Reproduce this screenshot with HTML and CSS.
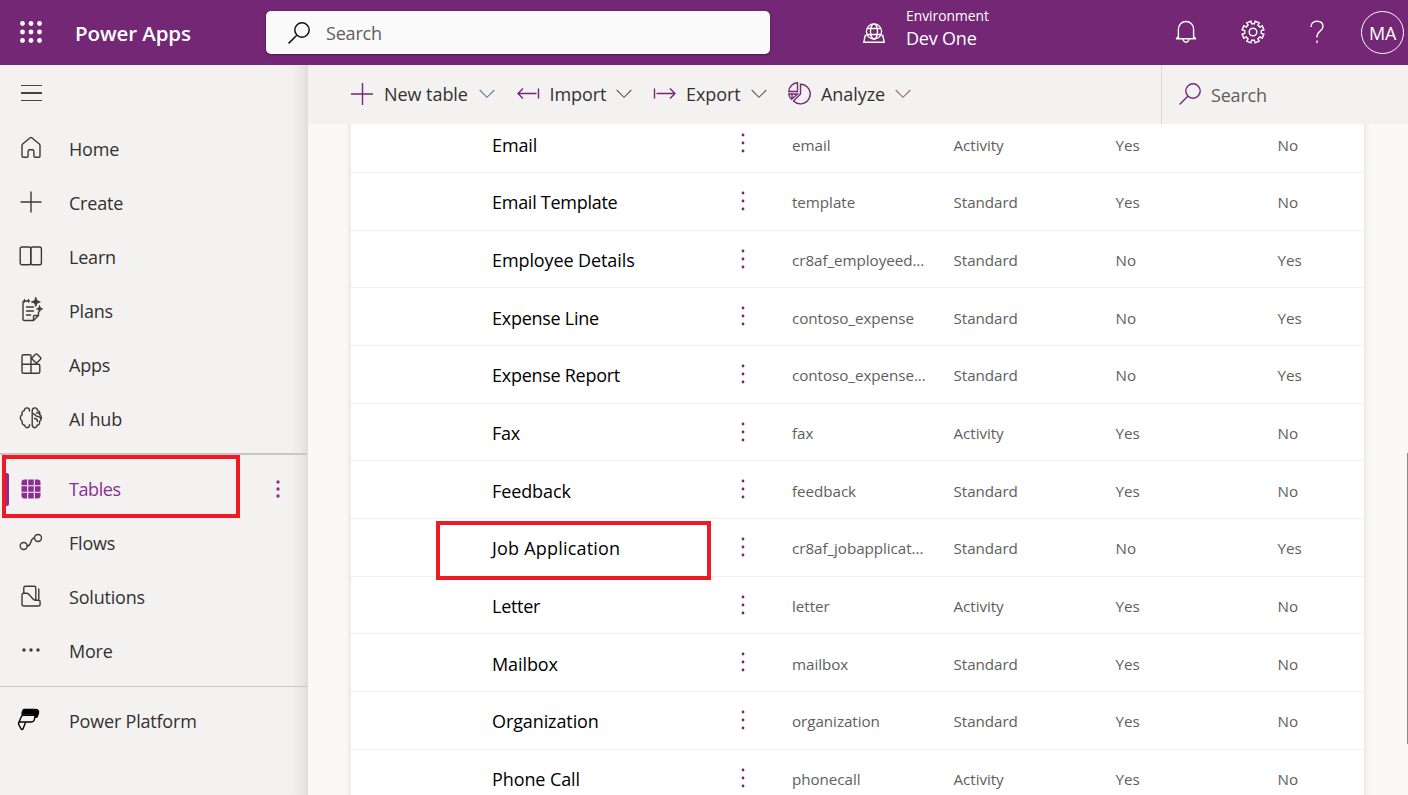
FILE: index.html
```html
<!DOCTYPE html>
<html lang="en">
<head>
<meta charset="utf-8">
<title>Power Apps</title>
<link rel="stylesheet" href="styles.css">
</head>
<body>
<svg class="defs" aria-hidden="true">
  <symbol id="dots" viewBox="0 0 4 20"><circle cx="2" cy="2" r="1.4"/><circle cx="2" cy="10" r="1.4"/><circle cx="2" cy="18" r="1.4"/></symbol>
  <symbol id="chevron" viewBox="0 0 16 10"><path d="M.7 1 8 8.3 15.3 1"/></symbol>
  <symbol id="lens" viewBox="0 0 22 22"><circle cx="14" cy="8" r="7.2"/><path d="M8.8 13.2.6 21.4"/></symbol>
</svg>
<header class="topbar">
  <svg class="waffle" width="22" height="22" viewBox="0 0 22 22"><g fill="#fff"><circle cx="2.5" cy="2.5" r="2.4"/><circle cx="11" cy="2.5" r="2.4"/><circle cx="19.5" cy="2.5" r="2.4"/><circle cx="2.5" cy="11" r="2.4"/><circle cx="11" cy="11" r="2.4"/><circle cx="19.5" cy="11" r="2.4"/><circle cx="2.5" cy="19.5" r="2.4"/><circle cx="11" cy="19.5" r="2.4"/><circle cx="19.5" cy="19.5" r="2.4"/></g></svg>
  <div class="brand"><span>Power Apps</span></div>
  <div class="search"><svg class="line dark" width="22" height="22"><use href="#lens"/></svg><span>Search</span></div>
  <svg class="globe line" width="22" height="20" viewBox="0 0 22 20"><circle cx="11" cy="8.5" r="7.6"/><ellipse cx="11" cy="8.5" rx="3.5" ry="7.6"/><path d="M4 5.5h14M4 11.5h14M3.500 12.500H2.200L.8 19.200h20.400l-1.400-6.700h-1.300"/></svg>
  <div class="env"><span class="env-label">Environment</span><span class="env-name">Dev One</span></div>
  <div class="actions">
    <svg class="line" width="22" height="24" viewBox="0 0 22 24"><path d="M3.400 18.200V9.400C3.400 4.700 6.700 1.500 11 1.500s7.600 3.200 7.600 7.900v8.800M1 18.700h20M1 18.700l2.400-2M21 18.700l-2.400-2M8 19c.3 2 1.400 3.200 3 3.200s2.700-1.200 3-3.200"/></svg>
    <svg class="line gear" width="24" height="24" viewBox="-12 -12 24 24"><circle r="3.800"/><path d="M-2.100-10.900-1.400-8.300 1.400-8.300 2.100-10.900 6.200-9.200 4.900-6.900 6.900-4.900 9.200-6.200 10.900-2.100 8.300-1.400 8.300 1.400 10.900 2.100 9.200 6.200 6.900 4.900 4.900 6.900 6.200 9.200 2.100 10.900 1.400 8.300-1.400 8.300-2.100 10.900-6.200 9.200-4.900 6.900-6.900 4.900-9.200 6.200-10.900 2.100-8.300 1.400-8.300-1.400-10.900-2.100-9.200-6.200-6.900-4.900-4.900-6.900-6.200-9.200z"/></svg>
    <svg class="line help" width="14" height="24" viewBox="0 0 14 24"><path d="M1 7C1 3.300 3.400 1.200 7 1.200s6 2.100 6 5.300c0 4.300-6 5-6 9.500v1.500M7 20.500V23"/></svg>
    <div class="avatar"><span>MA</span></div>
  </div>
</header>
<div class="body">
  <nav class="side">
    <div class="burger"><i></i><i></i><i></i></div>
    <div class="item"><svg width="24" height="24" viewBox="0 0 24 24"><path d="M3 9.500Q3 8.600 3.700 8L11.200 1.700q.8-.6 1.600 0L20.300 8q.7.600.7 1.500V20q0 1.300-1.300 1.300h-3.500q-1.300 0-1.300-1.300v-4.500q0-1.700-1.700-1.700h-2.400q-1.700 0-1.700 1.700V20q0 1.300-1.300 1.300H4.300Q3 21.300 3 20z"/></svg><span>Home</span></div>
    <div class="item"><svg width="24" height="24" viewBox="0 0 24 24"><path d="M12 2v20M2 12h20"/></svg><span>Create</span></div>
    <div class="item"><svg width="24" height="24" viewBox="0 0 24 24"><rect x="1.200" y="3" width="10.600" height="17.700" rx="1.800"/><rect x="11.800" y="3" width="10.600" height="17.700" rx="1.800"/></svg><span>Learn</span></div>
    <div class="item"><svg width="24" height="24" viewBox="0 0 24 24"><path d="M10.500 3H5.500Q4 3 4 4.500V21q0 1.500 1.500 1.500h9l5-5V14M14.500 22.500v-3.700q0-1.300 1.300-1.300h3.700M5.500 1.800V4M9.500 1.800V4M7.500 9h7M7.500 13h7M7.500 17h4"/><path class="solid spark" d="m16.800-.7 1.300 3.300 3.300 1.300-3.300 1.300-1.300 3.300-1.300-3.300-3.300-1.300 3.300-1.300zM20.600 7.700l.9 2.300 2.300.9-2.300.9-.9 2.300-.9-2.300-2.300-.9 2.300-.9z"/></svg><span>Plans</span></div>
    <div class="item"><svg width="24" height="24" viewBox="0 0 24 24"><path d="M12 21.300V3.800Q12 2.700 10.500 2.700h-6Q3 2.700 3 4.200V20q0 1.300 1.300 1.300h15q1.500 0 1.500-1.500v-6q0-1.500-1.500-1.500H3M16.600 2.300q.8-.8 1.600 0l3.300 3.300q.8.800 0 1.600l-3.300 3.300q-.8.800-1.600 0l-3.300-3.300q-.8-.8 0-1.600z"/></svg><span>Apps</span></div>
    <div class="item"><svg width="24" height="24" viewBox="0 0 24 24"><path d="M10.600 5C10.600 1 5.800.7 5.200 4.600 2.900 5 2.600 7.400 3.200 8.600.7 9.700.8 14 3.200 15.300c-.5 2.300.7 3.700 2.400 3.900.8 3.500 5 3.300 5-.4M13.200 5c0-4 4.800-4.300 5.400-.4 2.300.4 2.600 2.800 2 4 2.500 1.100 2.400 5.400 0 6.700.5 2.300-.7 3.700-2.400 3.900-.8 3.500-5 3.300-5-.4zM13.500 7.500c3 0 2.200 3 5.500 3 1.500 0 2.500 1 2.800 2M15.500 12.500c1.500 0 3 .5 3 3M17.500 7h2.500"/></svg><span>AI hub</span></div>
    <hr class="thick">
    <div class="item selected"><svg width="24" height="24" viewBox="0 0 24 24"><rect class="solid" x="2.500" y="2.500" width="19" height="19" rx="3"/><path class="grid" d="M8.700 2v20M15.300 2v20M2 8.700h20M2 15.300h20"/></svg><span>Tables</span><svg class="more" width="4" height="18" viewBox="0 0 4 18"><circle cx="2" cy="2" r="1.700"/><circle cx="2" cy="9" r="1.700"/><circle cx="2" cy="16" r="1.700"/></svg><div class="callout"></div></div>
    <div class="item"><svg width="24" height="24" viewBox="0 0 24 24"><circle cx="4.700" cy="16" r="3.500"/><circle cx="19" cy="8" r="3.500"/><path d="M8.200 16c5 0 2.300-8 7.300-8"/></svg><span>Flows</span></div>
    <div class="item"><svg width="24" height="24" viewBox="0 0 24 24"><path d="M4.800 9V3.800Q4.800 2.300 6.300 2.300h9q1.500 0 1.500 1.500V16M19.800 5v11.200M3 11q0-1.700 1.700-1.700h3q1.200 0 2 .9l4.600 5q.9 1 2.200 1h3.200q1.400 0 1.400 1.400v2.500q0 1.900-1.900 1.900H4.900Q3 22 3 20.100z"/></svg><span>Solutions</span></div>
    <div class="item"><svg width="24" height="24" viewBox="0 0 24 24"><g class="solid"><circle cx="5" cy="12" r="1.700"/><circle cx="12" cy="12" r="1.700"/><circle cx="19" cy="12" r="1.700"/></g></svg><span>More</span></div>
    <hr>
    <div class="item platform"><svg width="24" height="24" viewBox="0 0 24 24"><path fill="#000" d="M7 1.500h11.500q3.500 0 3 3.500L20 9H18q1-3-2-3H5l.5-2.500Q6 1.500 7 1.500z"/><path d="M4.500 8.300Q5 7.200 6.200 7.200h12.300L17.200 12Q16.500 14 14.500 14H2zM2 14l-.5 2 2.700 5q.9 1 1.800 0L8.500 14.500"/></svg><span>Power Platform</span></div>
  </nav>
  <main class="main">
    <div class="commands">
      <div class="cmd c1"><svg class="line" width="22" height="22" viewBox="0 0 22 22"><path d="M11.500 0v22M0 11h22"/></svg><span>New table</span><svg class="chev blue" width="16" height="10"><use href="#chevron"/></svg></div>
      <div class="cmd c2"><svg class="line" width="23" height="14" viewBox="0 0 23 14"><path d="M1 6.500h18.500M6 1.500l-5 5 5 5M21.500 1.500v10"/></svg><span>Import</span><svg class="chev" width="16" height="10"><use href="#chevron"/></svg></div>
      <div class="cmd c3"><svg class="line" width="23" height="14" viewBox="0 0 23 14"><path d="M1.500 1.500v10M3.500 6.500H22M17 1.500l5 5-5 5"/></svg><span>Export</span><svg class="chev" width="16" height="10"><use href="#chevron"/></svg></div>
      <div class="cmd c4"><svg class="line pie" width="23" height="23" viewBox="0 0 23 23"><path d="M12.500 2.200a9.800 9.800 0 1 1-7 16.800l7-7zM9.500.8v8.700H.8A9 9 0 0 1 9.500.8zM.8 12h8.700l-6 5.200Q1 15 .8 12zM4 12v4"/></svg><span>Analyze</span><svg class="chev tan" width="16" height="10"><use href="#chevron"/></svg></div>
      <div class="filter"><svg class="line" width="22" height="22"><use href="#lens"/></svg><span>Search</span></div>
    </div>
    <div class="content">
      <div class="table">
        <div class="row"><b>Email</b><svg><use href="#dots"/></svg><span>email</span><span>Activity</span><span>Yes</span><span>No</span></div>
        <div class="row tight"><b>Email Template</b><svg><use href="#dots"/></svg><span>template</span><span>Standard</span><span>Yes</span><span>No</span></div>
        <div class="row"><b>Employee Details</b><svg><use href="#dots"/></svg><span>cr8af_employeed...</span><span>Standard</span><span>No</span><span>Yes</span></div>
        <div class="row tight"><b>Expense Line</b><svg><use href="#dots"/></svg><span>contoso_expense</span><span>Standard</span><span>No</span><span>Yes</span></div>
        <div class="row tight"><b>Expense Report</b><svg><use href="#dots"/></svg><span>contoso_expense...</span><span>Standard</span><span>No</span><span>Yes</span></div>
        <div class="row tight"><b>Fax</b><svg><use href="#dots"/></svg><span>fax</span><span>Activity</span><span>Yes</span><span>No</span></div>
        <div class="row"><b>Feedback</b><svg><use href="#dots"/></svg><span>feedback</span><span>Standard</span><span>Yes</span><span>No</span></div>
        <div class="row marked"><b>Job Application</b><svg><use href="#dots"/></svg><span>cr8af_jobapplicat...</span><span>Standard</span><span>No</span><span>Yes</span><div class="callout"></div></div>
        <div class="row tight"><b>Letter</b><svg><use href="#dots"/></svg><span>letter</span><span>Activity</span><span>Yes</span><span>No</span></div>
        <div class="row"><b>Mailbox</b><svg><use href="#dots"/></svg><span>mailbox</span><span>Standard</span><span>Yes</span><span>No</span></div>
        <div class="row"><b>Organization</b><svg><use href="#dots"/></svg><span>organization</span><span>Standard</span><span>Yes</span><span>No</span></div>
        <div class="row"><b>Phone Call</b><svg><use href="#dots"/></svg><span>phonecall</span><span>Activity</span><span>Yes</span><span>No</span></div>
      </div>
      <div class="scroll"></div>
    </div>
  </main>
</div>
</body>
</html>
```
FILE: styles.css
```css
* { box-sizing: border-box; }
body { margin: 0; width: 1408px; height: 795px; overflow: hidden; display: flex; flex-direction: column; background: #faf9f8; font-family: "Open Sans", "Noto Sans", sans-serif; font-size: 18px; letter-spacing: -.2px; color: #323130; white-space: nowrap; }
svg { flex: none; fill: none; overflow: visible; }
.defs { position: absolute; width: 0; height: 0; }
.line { stroke: #742774; stroke-width: 1.4; }

.topbar { height: 65px; flex: none; display: flex; align-items: center; background: #742774; color: #fff; }
.topbar .line { stroke: #fff; }
.waffle { margin: 0 0 2px 20px; }
.brand { width: 191px; margin-left: 33px; font-size: 20.5px; font-weight: 600; letter-spacing: -.1px; padding-top: 1px; }
.search { width: 504px; height: 43px; display: flex; align-items: center; gap: 16px; padding-left: 22px; border-radius: 5px; background: #fafafa; color: #605e5c; box-shadow: 0 1px 3px #0005; }
.search .dark { stroke: #111; stroke-width: 1.5; }
.globe { margin-left: 93px; margin-top: 1px; }
.env { margin-left: 21px; width: 170px; height: 65px; padding-top: 6px; display: flex; flex-direction: column; }
.env-label { font-size: 13.8px; line-height: 19px; letter-spacing: 0; }
.env-name { font-size: 18px; line-height: 26px; }
.actions { display: flex; align-items: center; margin: 0 4px 2px auto; }
.gear { margin-left: 44px; }
.help { margin-left: 45px; }
.avatar { margin: 2px 0 0 37px; width: 43px; height: 43px; border: 1px solid #fff; border-radius: 50%; display: flex; align-items: center; justify-content: center; padding-top: 1px; letter-spacing: -.3px; }

.body { display: flex; flex: 1; min-height: 0; }
.side { width: 308px; flex: none; background: linear-gradient(90deg, #0000 290px, #0000000a 301px, #00000016), #f3f2f1; }
.burger { display: flex; flex-direction: column; gap: 6px; padding: 20px 0 0 21px; height: 57px; }
.burger i { width: 21px; height: 1.3px; background: #444; }
.item { position: relative; height: 54px; display: flex; align-items: center; padding-left: 19.4px; gap: 25.6px; }
.item svg { stroke: #3b3a39; stroke-width: 1.4; margin-bottom: 2px; stroke-linecap: round; }
.item svg .solid { fill: #3b3a39; stroke: none; }
.item svg .spark { stroke: #3b3a39; stroke-width: .7; }
.side hr { margin: 8px 1px 7px 0; border: 0; height: 1px; background: #c8c6c4; }
.side .thick { height: 2px; margin: 7px 1px 7px 0; }
.item.selected { color: #8b2d91; letter-spacing: -.4px; }
.item.selected svg { margin-bottom: 1px; }
.item.selected::before { content: ""; position: absolute; left: 4px; top: 11px; width: 5px; height: 33px; border-radius: 2px; background: #8b2d91; }
.item.selected .solid { fill: #8b2d91; }
.item.selected .grid { stroke: #f3f2f1; stroke-width: 1.1; }
.item.selected .more { fill: #8b2d91; stroke: none; margin-left: auto; margin-right: 28px; }
.callout { position: absolute; border: 4px solid #ed1c24; }
.side .callout { left: 2px; top: -7px; width: 238px; height: 63px; }
.platform svg { stroke: #000; margin-left: -2px; margin-right: 2px; }

.main { flex: 1; min-width: 0; display: flex; flex-direction: column; }
.commands { height: 59px; flex: none; display: flex; align-items: center; background: #f3f2f1; padding-left: 43px; }
.cmd { display: flex; align-items: center; gap: 11px; height: 100%; padding-bottom: 2px; letter-spacing: -.05px; }
.c1 { width: 166px; }
.c2 { width: 136px; gap: 9.5px; }
.c2 span { letter-spacing: -.1px; }
.c3 { width: 135px; gap: 10px; }
.c4 { gap: 10px; }
.chev { stroke: #605e5c; stroke-width: 1.1; }
.cmd .blue { stroke: #5f7c98; }
.cmd .tan { stroke: #8a765c; }
.filter { margin-left: auto; width: 247px; height: 100%; display: flex; align-items: center; gap: 10px; padding-left: 17px; border-left: 1px solid #dcdad8; color: #605e5c; }
.filter svg { margin-bottom: 2px; }
.content { flex: 1; min-height: 0; overflow: hidden; display: flex; padding-left: 43px; }
.table { width: 1013px; height: 701px; margin-top: -8.6px; flex: none; background: #fff; box-shadow: 0 0 7px #0002; }
.row { position: relative; height: 57.68px; display: grid; grid-template-columns: 249px 51px 161.5px 162px 162px 1fr; padding: 2px 0 0 141px; align-items: center; border-bottom: 1px solid #f0efee; font-size: 15.2px; color: #605e5c; letter-spacing: -.05px; }
.row b { font-weight: 400; font-size: 18px; letter-spacing: -.1px; color: #000; }
.tight b { letter-spacing: -.27px; }
.marked b { letter-spacing: .2px; }
.row svg { width: 4px; height: 20px; margin-bottom: 3px; fill: #742774; }
.row .callout { left: 85px; top: 2px; width: 275px; height: 59px; z-index: 1; }
.scroll { margin-left: auto; width: 1px; height: 291px; margin-top: 329px; background: #8a8886; }
```
